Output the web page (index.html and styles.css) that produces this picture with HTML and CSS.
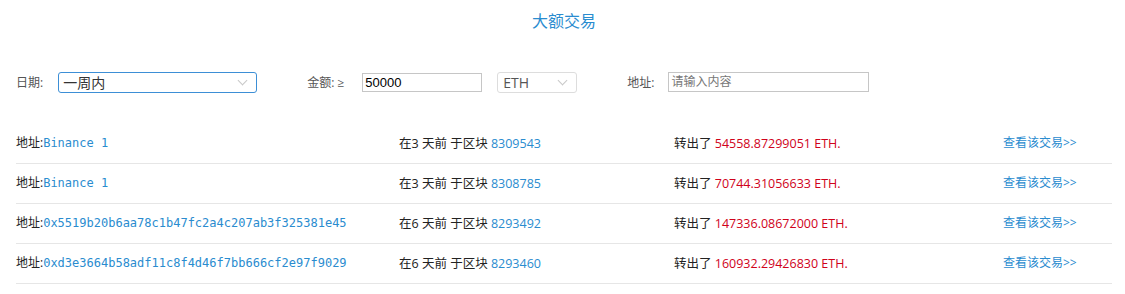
FILE: index.html
```html
<!DOCTYPE html>
<html>
<head>
	<meta charset="UTF-8">
	<title>大额交易</title>
	<link rel="stylesheet" href="styles.css">
</head>
<body>
	<div class="page">
		<h2 class="title">大额交易</h2>
		<div class="filter">
			<span class="label">日期:</span>
			<div class="select date">
				<span>一周内</span>
				<i class="arrow"></i>
			</div>
			<span class="label amount">金额: &ge;</span>
			<input class="input num" type="text" value="50000">
			<div class="select coin">
				<span>ETH</span>
				<i class="arrow"></i>
			</div>
			<span class="label addr">地址:</span>
			<input class="input text" type="text" placeholder="请输入内容">
		</div>
		<ul class="list">
			<li class="row">
				<div class="col c1">地址:<a class="mono">Binance 1</a></div>
				<div class="col c2">在3 天前 于区块 <a>8309543</a></div>
				<div class="col c3">转出了 <em>54558.87299051 ETH.</em></div>
				<div class="col c4"><a>查看该交易&gt;&gt;</a></div>
			</li>
			<li class="row">
				<div class="col c1">地址:<a class="mono">Binance 1</a></div>
				<div class="col c2">在3 天前 于区块 <a>8308785</a></div>
				<div class="col c3">转出了 <em>70744.31056633 ETH.</em></div>
				<div class="col c4"><a>查看该交易&gt;&gt;</a></div>
			</li>
			<li class="row">
				<div class="col c1">地址:<a class="mono">0x5519b20b6aa78c1b47fc2a4c207ab3f325381e45</a></div>
				<div class="col c2">在6 天前 于区块 <a>8293492</a></div>
				<div class="col c3">转出了 <em>147336.08672000 ETH.</em></div>
				<div class="col c4"><a>查看该交易&gt;&gt;</a></div>
			</li>
			<li class="row">
				<div class="col c1">地址:<a class="mono">0xd3e3664b58adf11c8f4d46f7bb666cf2e97f9029</a></div>
				<div class="col c2">在6 天前 于区块 <a>8293460</a></div>
				<div class="col c3">转出了 <em>160932.29426830 ETH.</em></div>
				<div class="col c4"><a>查看该交易&gt;&gt;</a></div>
			</li>
		</ul>
	</div>
</body>
</html>
```
FILE: styles.css
```css
body,ul,h2{
	margin: 0;
	padding: 0;
}
body{
	font-family: "Open Sans", "Noto Sans CJK SC", sans-serif;
	color: #333;
	background: #fff;
}
.page{
	padding: 0 13px 0 16px;
}
.title{
	text-align: center;
	font-size: 16px;
	font-weight: normal;
	color: #2a8ccf;
	line-height: 20px;
	padding-top: 11px;
	height: 40px;
}
.filter{
	display: flex;
	align-items: center;
	height: 22px;
	margin-top: 20px;
	font-size: 12px;
}
.label{
	color: #555;
	margin-right: 15px;
}
.label.amount{
	margin-left: 50px;
	margin-right: 18px;
}
.label.addr{
	margin-left: 50px;
	margin-right: 14px;
}
.select{
	display: flex;
	align-items: center;
	justify-content: space-between;
	box-sizing: border-box;
	height: 21px;
	border-radius: 3px;
	padding: 0 10px 0 4px;
	font-size: 14px;
	color: #333;
}
.select.date{
	width: 199px;
	border: 1px solid #3d8fd6;
}
.select.coin{
	width: 80px;
	border: 1px solid #ddd;
	margin-left: 15px;
	padding-left: 5px;
	color: #555;
}
.arrow{
	width: 6px;
	height: 6px;
	border-right: 1px solid #c8c8c8;
	border-bottom: 1px solid #c8c8c8;
	transform: rotate(45deg);
	margin-top: -4px;
}
.input{
	box-sizing: border-box;
	height: 19px;
	border: 1px solid #c6c6c6;
	padding: 0 2px;
	font-family: "Liberation Sans", "Noto Sans CJK SC", sans-serif;
	font-size: 13px;
	color: #000;
	outline: none;
}
.input.num{
	width: 120px;
}
.input.text{
	width: 201px;
	height: 20px;
	font-size: 12px;
}
.input::placeholder{
	color: #777;
}
.list{
	margin-top: 31px;
	width: 1096px;
}
.list li{
	list-style: none;
}
.row{
	display: flex;
	align-items: center;
	height: 36px;
	padding-bottom: 3px;
	border-bottom: 1px solid #e6e6e6;
	font-size: 12px;
	color: #222;
}
.col{
	white-space: nowrap;
}
.c1{
	width: 383px;
}
.c2{
	width: 275px;
	font-family: "Open Sans", "Noto Sans CJK SC", sans-serif;
	font-size: 12.5px;
}
.c3{
	width: 329px;
	font-family: "Open Sans", "Noto Sans CJK SC", sans-serif;
	font-size: 12.5px;
}
.row a{
	color: #2a8ccf;
}
.row em{
	font-style: normal;
	color: #d0021b;
}
.mono{
	font-family: "DejaVu Sans Mono", monospace;
	font-size: 12px;
}
```
